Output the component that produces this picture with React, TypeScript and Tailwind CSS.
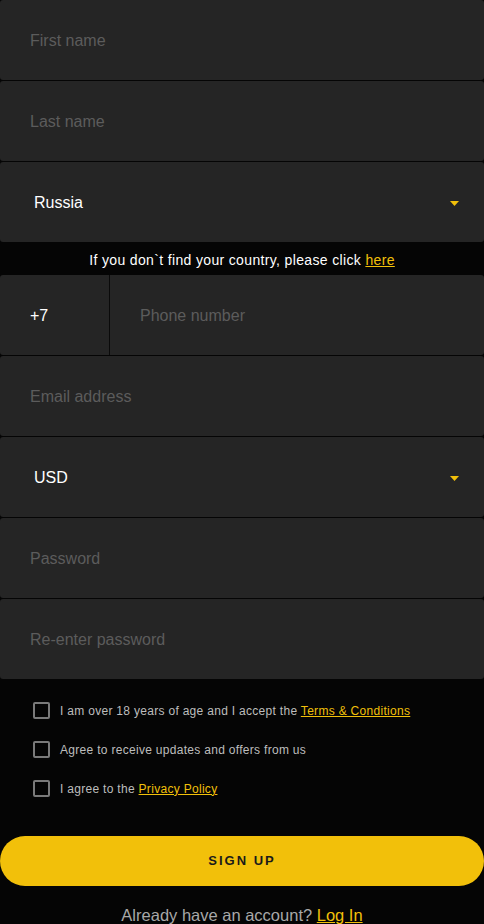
import React from 'react';

const font = { fontFamily: '"Liberation Sans", Arial, sans-serif' };

const Caret = () => (
  <svg width="9" height="5" viewBox="0 0 9 5" className="shrink-0">
    <path d="M0 0 H9 L4.5 5 Z" fill="#f2c00a" />
  </svg>
);

const Field = ({ placeholder, type = 'text' }: { placeholder: string; type?: string }) => (
  <div className="h-[80px] bg-[#252525] rounded-[3px] flex items-center px-[30px] pt-[2px]">
    <input
      type={type}
      placeholder={placeholder}
      className="w-full bg-transparent outline-none text-[16px] text-white placeholder:text-[#5c5c5c]"
      style={font}
    />
  </div>
);

const SelectField = ({ value }: { value: string }) => (
  <div className="h-[80px] bg-[#252525] rounded-[3px] flex items-center justify-between pl-[34px] pr-[25px] pt-[2px]">
    <span className="text-[16px] text-white">{value}</span>
    <Caret />
  </div>
);

const Check = ({ children }: { children: React.ReactNode }) => (
  <label className="flex items-center gap-[10px] h-[39px]">
    <span className="w-[17px] h-[17px] border-2 border-[#7a7a7a] rounded-[2px] shrink-0" />
    <span className="text-[12px] text-[#bdbdbd] tracking-[0.3px]">{children}</span>
  </label>
);

export default function App() {
  return (
    <div className="w-[484px] min-h-[924px] bg-[#050505]" style={font}>
      <div className="flex flex-col gap-px">
        <Field placeholder="First name" />
        <Field placeholder="Last name" />
        <SelectField value="Russia" />
      </div>

      <div className="h-[33px] flex items-center justify-center pt-[3px] text-[14px] text-white tracking-[0.35px]">
        If you don`t find your country, please click&nbsp;
        <a className="text-[#f2c00a] underline">here</a>
      </div>

      <div className="flex flex-col gap-px">
        <div className="h-[80px] bg-[#252525] rounded-[3px] flex">
          <div className="w-[110px] border-r border-[#0a0a0a] flex items-center pl-[30px] pt-[2px] text-[16px] text-white">
            +7
          </div>
          <div className="flex-1 flex items-center pl-[30px] pt-[2px]">
            <input
              placeholder="Phone number"
              className="w-full bg-transparent outline-none text-[16px] text-white placeholder:text-[#5c5c5c]"
              style={font}
            />
          </div>
        </div>
        <Field placeholder="Email address" />
        <SelectField value="USD" />
        <Field placeholder="Password" type="password" />
        <Field placeholder="Re-enter password" type="password" />
      </div>

      <div className="pl-[33px] pt-[12px]">
        <Check>
          I am over 18 years of age and I accept the{' '}
          <a className="text-[#f2c00a] underline">Terms &amp; Conditions</a>
        </Check>
        <Check>Agree to receive updates and offers from us</Check>
        <Check>
          I agree to the <a className="text-[#f2c00a] underline">Privacy Policy</a>
        </Check>
      </div>

      <button className="mt-[28px] w-full h-[50px] rounded-full bg-[#f2c00a] text-[#1a1a1a] text-[13px] font-bold tracking-[2px]">
        SIGN UP
      </button>

      <div className="mt-[17px] text-center text-[16.5px] text-[#a8a8a8]">
        Already have an account? <a className="text-[#f2c00a] underline">Log In</a>
      </div>
    </div>
  );
}
